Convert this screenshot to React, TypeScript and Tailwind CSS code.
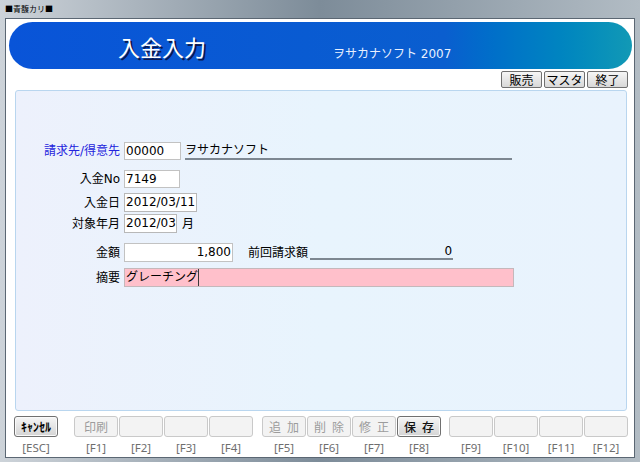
import React from "react";

const JP = "font-['Noto_Sans_CJK_JP',sans-serif]";
const MIX = "font-['DejaVu_Sans','Noto_Sans_CJK_JP',sans-serif]";

function TopBtn({ label }: { label: string }) {
  return (
    <div className="w-[41px] h-[17px] flex items-center justify-center rounded-[2px] border border-[#707070] bg-linear-to-b from-[#f6f6f6] to-[#d8d8d8] text-[12px] leading-none text-black font-['Noto_Sans_CJK_JP',sans-serif]">
      {label}
    </div>
  );
}

function FBtn({ label, enabled, bold }: { label: string; enabled?: boolean; bold?: boolean }) {
  if (enabled) {
    return (
      <div
        className={
          bold
            ? "w-[44px] h-[21px] flex items-center justify-center rounded-[3px] border border-[#707070] bg-linear-to-b from-[#f6f6f6] to-[#d4d4d4] text-[12px] leading-none text-black font-bold font-['Noto_Sans_CJK_JP',sans-serif] shadow-[inset_0_0_0_1px_#fafafa]"
            : "w-[44px] h-[21px] flex items-center justify-center rounded-[3px] border border-[#707070] bg-linear-to-b from-[#f6f6f6] to-[#d4d4d4] text-[12px] leading-none text-[#111] font-medium font-['Noto_Sans_CJK_JP',sans-serif] shadow-[inset_0_0_0_1px_#fafafa]"
        }
      >
        {label}
      </div>
    );
  }
  return (
    <div className="w-[44px] h-[21px] flex items-center justify-center rounded-[3px] border border-[#c9c9c9] bg-[#f3f3f3] text-[12px] leading-none text-[#9c9c9c] font-['Noto_Sans_CJK_JP',sans-serif] whitespace-pre">
      {label}
    </div>
  );
}

function FLabel({ label }: { label: string }) {
  return (
    <div className="w-[44px] text-center text-[11.5px] leading-[16px] text-[#6e6e6e] font-['Noto_Sans',sans-serif]">
      {label}
    </div>
  );
}

export default function App() {
  return (
    <div className="w-[640px] h-[462px] flex flex-col bg-linear-to-r from-[#cdd3d9] via-[#7d8c99] to-[#b2bcc4] overflow-hidden">
      {/* title bar */}
      <div className="h-[18px] flex items-center pl-[5px] text-[8px] leading-none text-black font-['Noto_Sans_CJK_JP',sans-serif]">
        ■青馥カリ■
      </div>
      {/* client */}
      <div className="flex-1 px-[5px] pb-[4px] flex">
        <div className="flex-1 border border-[#5b6773] bg-white flex flex-col">
          {/* banner */}
          <div className="mt-[3px] ml-[3px] mr-[2px] h-[47px] rounded-full bg-linear-to-r from-[#0954d8] via-[#0a5ecf] via-70% to-[#1299b5] flex items-start">
            <div className={"ml-[109px] mt-[11px] text-[22px] leading-[26px] text-white [text-shadow:2px_2px_0_#0a1850] " + JP}>
              入金入力
            </div>
            <div className={"ml-[127px] mt-[24px] text-[12px] leading-[16px] text-[#e8f0ff] " + MIX}>
              ヲサカナソフト 2007
            </div>
          </div>
          {/* top buttons */}
          <div className="mt-[2px] h-[17px] flex justify-end gap-[2px] pr-[6px]">
            <TopBtn label="販売" />
            <TopBtn label="マスタ" />
            <TopBtn label="終了" />
          </div>
          {/* panel */}
          <div className="mt-[2px] ml-[9px] w-[612px] h-[321px] rounded-[3px] border border-[#b9d6ef] bg-linear-to-r from-[#edf1fc] via-[#e8f4fd] to-[#e9f3fd] flex flex-col text-[12px]">
            {/* row 1 */}
            <div className="mt-[51px] h-[18px] flex items-center">
              <div className={"w-[104px] text-right text-[#2424dd] " + MIX}>請求先/得意先</div>
              <div className={"ml-[4px] w-[57px] h-[18px] border border-[#c2c2c2] bg-white pl-[1px] leading-[16px] " + MIX}>00000</div>
              <div className={"ml-[4px] w-[327px] h-[18px] border-b-2 border-[#7d8791] leading-[16px] " + MIX}>ヲサカナソフト</div>
            </div>
            {/* row 2 */}
            <div className="mt-[10px] h-[18px] flex items-center">
              <div className={"w-[104px] text-right text-black " + MIX}>入金No</div>
              <div className={"ml-[4px] w-[56px] h-[18px] border border-[#c2c2c2] bg-white pl-[1px] leading-[16px] " + MIX}>7149</div>
            </div>
            {/* row 3 */}
            <div className="mt-[5px] h-[19px] flex items-center">
              <div className={"w-[104px] text-right text-black " + MIX}>入金日</div>
              <div className={"ml-[4px] w-[73px] h-[19px] border border-[#b8b8b8] bg-white pl-[1px] leading-[17px] " + MIX}>2012/03/11</div>
            </div>
            {/* row 4 */}
            <div className="mt-[2px] h-[19px] flex items-center">
              <div className={"w-[104px] text-right text-black " + MIX}>対象年月</div>
              <div className={"ml-[4px] w-[53px] h-[19px] border border-[#b8b8b8] bg-white pl-[1px] leading-[17px] " + MIX}>2012/03</div>
              <div className={"ml-[5px] text-black " + MIX}>月</div>
            </div>
            {/* row 5 */}
            <div className="mt-[10px] h-[19px] flex items-center">
              <div className={"w-[104px] text-right text-black " + MIX}>金額</div>
              <div className={"ml-[4px] w-[109px] h-[19px] border border-[#c2c2c2] bg-white pr-[1px] text-right leading-[17px] " + MIX}>1,800</div>
              <div className={"ml-[15px] text-black " + MIX}>前回請求額</div>
              <div className={"ml-[2px] w-[143px] h-[17px] self-start border-b-2 border-[#7d8791] pr-[1px] text-right leading-[17px] " + MIX}>0</div>
            </div>
            {/* row 6 */}
            <div className="mt-[6px] h-[19px] flex items-center">
              <div className={"w-[104px] text-right text-black " + MIX}>摘要</div>
              <div className={"ml-[4px] w-[390px] h-[19px] border border-[#c4b8bb] bg-[#ffc0cb] pl-[1px] flex items-stretch leading-[17px] " + MIX}>
                <span>グレーチング</span>
                <span className="w-[1px] bg-[#3a3a3a]" />
              </div>
            </div>
          </div>
          {/* function buttons */}
          <div className="mt-[5px] h-[21px] flex ml-[8px]">
            <FBtn label="ｷｬﾝｾﾙ" enabled bold />
            <div className="ml-[16px] flex gap-[1px]">
              <FBtn label="印刷" />
              <FBtn label="" />
              <FBtn label="" />
              <FBtn label="" />
            </div>
            <div className="ml-[9px] flex gap-[1px]">
              <FBtn label={"追\u2002加"} />
              <FBtn label={"削\u2002除"} />
              <FBtn label={"修\u2002正"} />
              <FBtn label={"保\u2002存"} enabled />
            </div>
            <div className="ml-[8px] flex gap-[1px]">
              <FBtn label="" />
              <FBtn label="" />
              <FBtn label="" />
              <FBtn label="" />
            </div>
          </div>
          <div className="mt-[3px] h-[16px] flex ml-[8px]">
            <FLabel label="[ESC]" />
            <div className="ml-[16px] flex gap-[1px]">
              <FLabel label="[F1]" />
              <FLabel label="[F2]" />
              <FLabel label="[F3]" />
              <FLabel label="[F4]" />
            </div>
            <div className="ml-[9px] flex gap-[1px]">
              <FLabel label="[F5]" />
              <FLabel label="[F6]" />
              <FLabel label="[F7]" />
              <FLabel label="[F8]" />
            </div>
            <div className="ml-[8px] flex gap-[1px]">
              <FLabel label="[F9]" />
              <FLabel label="[F10]" />
              <FLabel label="[F11]" />
              <FLabel label="[F12]" />
            </div>
          </div>
        </div>
      </div>
    </div>
  );
}
